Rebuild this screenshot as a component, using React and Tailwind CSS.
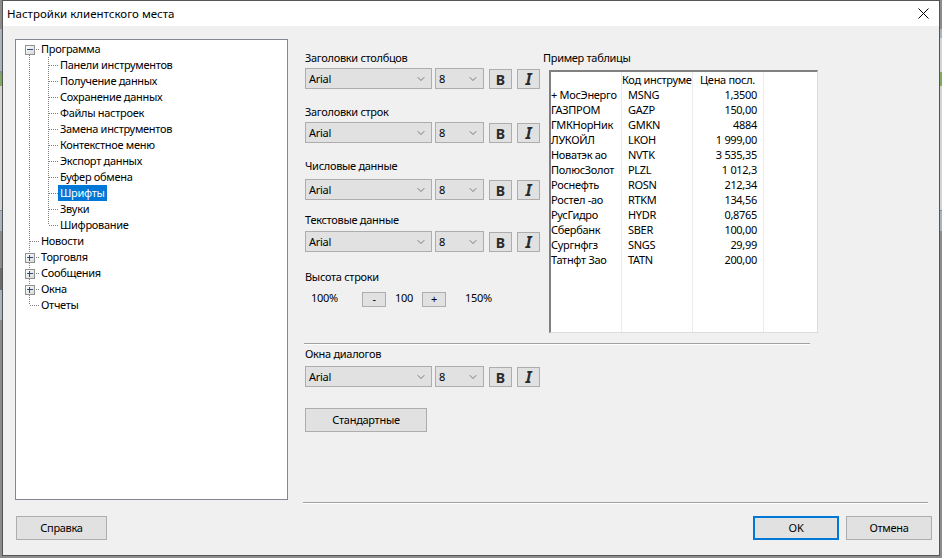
import { ChevronDown } from 'lucide-react';

const treeItems = [
  { label: 'Программа', level: 0, box: '-' },
  { label: 'Панели инструментов', level: 1 },
  { label: 'Получение данных', level: 1 },
  { label: 'Сохранение данных', level: 1 },
  { label: 'Файлы настроек', level: 1 },
  { label: 'Замена инструментов', level: 1 },
  { label: 'Контекстное меню', level: 1 },
  { label: 'Экспорт данных', level: 1 },
  { label: 'Буфер обмена', level: 1 },
  { label: 'Шрифты', level: 1, selected: true },
  { label: 'Звуки', level: 1 },
  { label: 'Шифрование', level: 1 },
  { label: 'Новости', level: 0 },
  { label: 'Торговля', level: 0, box: '+' },
  { label: 'Сообщения', level: 0, box: '+' },
  { label: 'Окна', level: 0, box: '+' },
  { label: 'Отчеты', level: 0 },
];

const rows = [
  ['+ МосЭнерго', 'MSNG', '1,3500'],
  ['ГАЗПРОМ', 'GAZP', '150,00'],
  ['ГМКНорНик', 'GMKN', '4884'],
  ['ЛУКОЙЛ', 'LKOH', '1 999,00'],
  ['Новатэк ао', 'NVTK', '3 535,35'],
  ['ПолюсЗолот', 'PLZL', '1 012,3'],
  ['Роснефть', 'ROSN', '212,34'],
  ['Ростел -ао', 'RTKM', '134,56'],
  ['РусГидро', 'HYDR', '0,8765'],
  ['Сбербанк', 'SBER', '100,00'],
  ['Сургнфгз', 'SNGS', '29,99'],
  ['Татнфт Зао', 'TATN', '200,00'],
];

function TreeLines() {
  return (
    <svg className="absolute left-0 top-0" width="280" height="300" shapeRendering="crispEdges">
      <g stroke="#808080" strokeDasharray="1 1" fill="none">
        <path d="M13.5 15V265" />
        <path d="M32.5 17V185" />
        <path d="M18 9.5H24" />
        <path d="M14 201.5H24M18 217.5H24M18 233.5H24M18 249.5H24M14 265.5H24" />
        {treeItems.map((item, i) =>
          item.level === 1 ? <path key={i} d={`M33 ${9.5 + i * 16}H43`} /> : null
        )}
      </g>
    </svg>
  );
}

function Expander({ sign, top }) {
  return (
    <div
      className="absolute left-[9px] h-[10px] w-[10px] border border-[#919191] bg-gradient-to-br from-white to-[#d8d8d8]"
      style={{ top }}
    >
      <div className="absolute left-[1px] top-[3px] h-[1px] w-[6px] bg-[#2f4a80]" />
      {sign === '+' && <div className="absolute left-[3px] top-[1px] h-[6px] w-[1px] bg-[#2f4a80]" />}
    </div>
  );
}

function Tree() {
  return (
    <div className="absolute left-[15px] top-[39px] h-[461px] w-[273px] border border-[#828790] bg-white">
      <TreeLines />
      {treeItems.map((item, i) => (
        <div key={item.label}>
          {item.box && <Expander sign={item.box} top={5 + i * 16} />}
          <div
            className={`absolute flex h-[16px] items-center whitespace-nowrap px-[2px] ${
              item.level === 0 ? 'left-[23px]' : 'left-[42px]'
            } ${item.selected ? 'bg-[#0078d7] text-white' : 'text-black'}`}
            style={{ top: 1 + i * 16 }}
          >
            {item.label}
          </div>
        </div>
      ))}
    </div>
  );
}

function FontRow({ label, labelTop, top }) {
  return (
    <div>
      <div className="absolute left-[305px] whitespace-nowrap leading-[14px]" style={{ top: labelTop }}>
        {label}
      </div>
      <div
        className="absolute left-[305px] flex h-[21px] w-[127px] items-center justify-between border border-[#adadad] bg-[#e1e1e1] pl-[3px] pr-[4px] pt-[1px]"
        style={{ top }}
      >
        <span>Arial</span>
        <ChevronDown size={12} strokeWidth={1.2} className="text-[#333]" />
      </div>
      <div
        className="absolute left-[435px] flex h-[21px] w-[49px] items-center justify-between border border-[#adadad] bg-[#e1e1e1] pl-[3px] pr-[4px] pt-[1px]"
        style={{ top }}
      >
        <span>8</span>
        <ChevronDown size={12} strokeWidth={1.2} className="text-[#333]" />
      </div>
      <div
        className="absolute left-[489px] flex h-[20px] w-[23px] items-center justify-center border border-[#adadad] bg-[#e1e1e1] font-['DejaVu_Sans'] text-[14px] font-bold tracking-normal text-[#2b2b2b]"
        style={{ top: top + 1 }}
      >
        B
      </div>
      <div
        className="absolute left-[517px] flex h-[20px] w-[23px] items-center justify-center border border-[#adadad] bg-[#e1e1e1] font-['Liberation_Serif'] text-[16px] font-bold italic tracking-normal text-[#2b2b2b]"
        style={{ top: top + 1 }}
      >
        I
      </div>
    </div>
  );
}

function Button({ left, top, width, height, focused, children }) {
  return (
    <div
      className={`absolute flex items-center justify-center bg-[#e1e1e1] ${
        focused ? 'border-2 border-[#0078d7]' : 'border border-[#adadad]'
      }`}
      style={{ left, top, width, height }}
    >
      {children}
    </div>
  );
}

function SampleTable() {
  return (
    <div className="absolute left-[549px] top-[70px] h-[263px] w-[269px] border-b border-l-2 border-r border-t-2 border-b-[#dcdcdc] border-l-[#808080] border-r-[#dcdcdc] border-t-[#808080] bg-white">
      <div className="absolute left-[70px] top-0 h-full w-[1px] bg-[#ececec]" />
      <div className="absolute left-[141px] top-0 h-full w-[1px] bg-[#ececec]" />
      <div className="absolute left-[212px] top-0 h-full w-[1px] bg-[#ececec]" />
      <div className="absolute left-[71px] top-[1px] w-[70px] overflow-hidden whitespace-nowrap leading-[14px]">Код инструме</div>
      <div className="absolute left-[142px] top-[1px] w-[62px] whitespace-nowrap text-right leading-[14px]">Цена посл.</div>
      {rows.map((r, i) => (
        <div key={r[1]} className="absolute left-0 h-[15px] w-full leading-[14px]" style={{ top: 16 + i * 15 }}>
          <span className="absolute left-0 whitespace-nowrap">{r[0]}</span>
          <span className="absolute left-[77px] whitespace-nowrap">{r[1]}</span>
          <span className="absolute left-[142px] w-[64px] whitespace-nowrap text-right">{r[2]}</span>
        </div>
      ))}
    </div>
  );
}

function Backdrop() {
  return (
    <>
      <div className="absolute left-0 top-[29px] h-[42px] w-[2px] bg-[#a9b4c0]" />
      <div className="absolute left-0 top-[73px] h-[13px] w-[2px] bg-[#7fa860]" />
      <div className="absolute left-0 top-[86px] h-[124px] w-[2px] bg-[#d4d4d4]" />
      <div className="absolute left-0 top-[211px] h-[20px] w-[2px] bg-[#a9b4c0]" />
      <div className="absolute left-0 top-[268px] h-[22px] w-[2px] bg-[#6d6d6d]" />
      <div className="absolute left-0 top-[290px] h-[30px] w-[2px] bg-[#a9b4c0]" />
      <div className="absolute right-0 top-[29px] h-[9px] w-[2px] bg-[#a9b4c0]" />
      <div className="absolute right-0 top-[38px] h-[34px] w-[2px] bg-[#d4d4d4]" />
      <div className="absolute right-0 top-[72px] h-[14px] w-[2px] bg-[#7fa860]" />
      <div className="absolute right-0 top-[86px] h-[124px] w-[2px] bg-[#d4d4d4]" />
      <div className="absolute right-0 top-[211px] h-[20px] w-[2px] bg-[#a9b4c0]" />
    </>
  );
}

export default function App() {
  return (
    <div className="relative h-[558px] w-[942px] overflow-hidden bg-[#8c8c8c] font-['Liberation_Sans',sans-serif] text-[11px] tracking-[-0.3px] text-black">
      <Backdrop />
      <div className="absolute left-[2px] top-0 h-[556px] w-[938px] border border-[#555] bg-[#f0f0f0]" />
      <div className="absolute left-[3px] top-[1px] flex h-[25px] w-[936px] items-center justify-between bg-white pl-[4px] pr-[10px] font-['Noto_Sans',sans-serif] text-[11.5px] tracking-normal">
        <span>Настройки клиентского места</span>
        <svg width="11" height="11" viewBox="0 0 11 11" stroke="#000" strokeWidth="1" fill="none">
          <path d="M0.5 0.5L10.5 10.5M10.5 0.5L0.5 10.5" />
        </svg>
      </div>

      <Tree />

      <FontRow label="Заголовки столбцов" labelTop={51} top={68} />
      <FontRow label="Заголовки строк" labelTop={105} top={122} />
      <FontRow label="Числовые данные" labelTop={159} top={179} />
      <FontRow label="Текстовые данные" labelTop={213} top={231} />

      <div className="absolute left-[543px] top-[51px] leading-[14px]">Пример таблицы</div>
      <SampleTable />

      <div className="absolute left-[305px] top-[270px] leading-[14px]">Высота строки</div>
      <div className="absolute left-[311px] top-[291px] leading-[14px]">100%</div>
      <Button left={362} top={292} width={24} height={15}>-</Button>
      <div className="absolute left-[395px] top-[291px] leading-[14px]">100</div>
      <Button left={422} top={292} width={24} height={15}>+</Button>
      <div className="absolute left-[465px] top-[291px] leading-[14px]">150%</div>

      <div className="absolute left-[304px] top-[343px] h-[2px] w-[506px] border-b border-t border-b-white border-t-[#a0a0a0]" />
      <FontRow label="Окна диалогов" labelTop={347} top={366} />
      <Button left={305} top={408} width={122} height={24}>Стандартные</Button>

      <div className="absolute left-[303px] top-[502px] h-[2px] w-[625px] border-b border-t border-b-white border-t-[#a0a0a0]" />

      <Button left={16} top={516} width={91} height={24}>Справка</Button>
      <Button left={753} top={516} width={86} height={24} focused>OK</Button>
      <Button left={846} top={516} width={86} height={24}>Отмена</Button>
    </div>
  );
}
